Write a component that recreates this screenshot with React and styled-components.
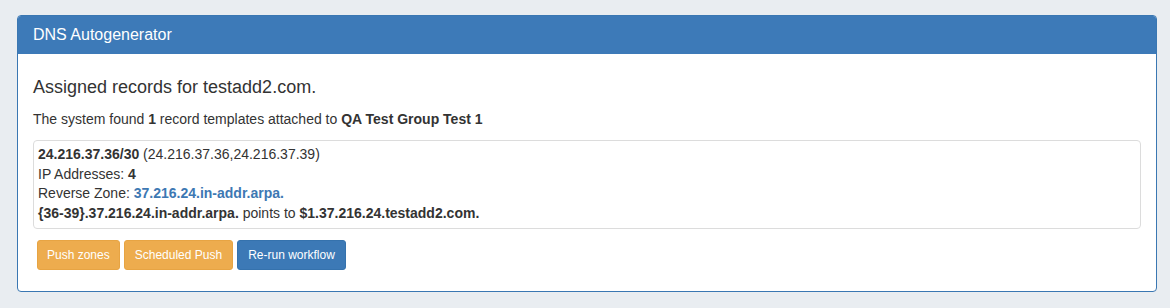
import React from "react";
import styled, { createGlobalStyle } from "styled-components";

const Global = createGlobalStyle`
  html, body { margin: 0; padding: 0; background: #e9edf1; }
  body { font-family: "Liberation Sans", Arial, sans-serif; color: #333; font-size: 14px; }
`;

const Page = styled.div`
  padding: 15px 13px 16px 17px;
`;

const Panel = styled.section`
  background: #fff;
  border: 1px solid #3a77b2;
  border-radius: 4px;
  overflow: hidden;
`;

const PanelHeading = styled.header`
  background: #3d7ab8;
  color: #fff;
  font-size: 16px;
  height: 38px;
  display: flex;
  align-items: center;
  padding: 0 15px;
`;

const PanelBody = styled.div`
  padding: 23px 15px 21px;
`;

const Title = styled.h3`
  margin: 0;
  font-size: 18px;
  font-weight: normal;
  line-height: 20px;
  color: #333;
`;

const Lead = styled.p`
  margin: 12px 0 11px;
  line-height: 20px;
`;

const RecordBox = styled.div`
  border: 1px solid #dcdcdc;
  border-radius: 4px;
  padding: 4px 4px 5px;
  line-height: 19.5px;
`;

const Line = styled.div``;

const Link = styled.a`
  color: #3d78b3;
  font-weight: bold;
  text-decoration: none;
`;

const Actions = styled.div`
  display: flex;
  gap: 4px;
  margin-top: 11px;
  padding-left: 4px;
`;

const Button = styled.button`
  font-family: "Liberation Sans", Arial, sans-serif;
  font-size: 12px;
  color: #fff;
  height: 30px;
  padding: 0 ${(p) => p.$pad || 10}px;
  border-radius: 3px;
  border: 1px solid ${(p) => (p.$variant === "primary" ? "#3572ad" : "#e7a443")};
  background: ${(p) => (p.$variant === "primary" ? "#3c79b6" : "#edac4e")};
  cursor: pointer;
`;

export default function App() {
  return (
    <>
      <Global />
      <Page>
        <Panel>
          <PanelHeading>DNS Autogenerator</PanelHeading>
          <PanelBody>
            <Title>Assigned records for testadd2.com.</Title>
            <Lead>
              The system found <b>1</b> record templates attached to <b>QA Test Group Test 1</b>
            </Lead>
            <RecordBox>
              <Line>
                <b>24.216.37.36/30</b> (24.216.37.36,24.216.37.39)
              </Line>
              <Line>
                IP Addresses: <b>4</b>
              </Line>
              <Line>
                Reverse Zone: <Link href="#">37.216.24.in-addr.arpa.</Link>
              </Line>
              <Line>
                <b>{"{36-39}.37.216.24.in-addr.arpa."}</b> points to <b>$1.37.216.24.testadd2.com.</b>
              </Line>
            </RecordBox>
            <Actions>
              <Button $variant="warning" $pad={9}>Push zones</Button>
              <Button $variant="warning">Scheduled Push</Button>
              <Button $variant="primary">Re-run workflow</Button>
            </Actions>
          </PanelBody>
        </Panel>
      </Page>
    </>
  );
}
